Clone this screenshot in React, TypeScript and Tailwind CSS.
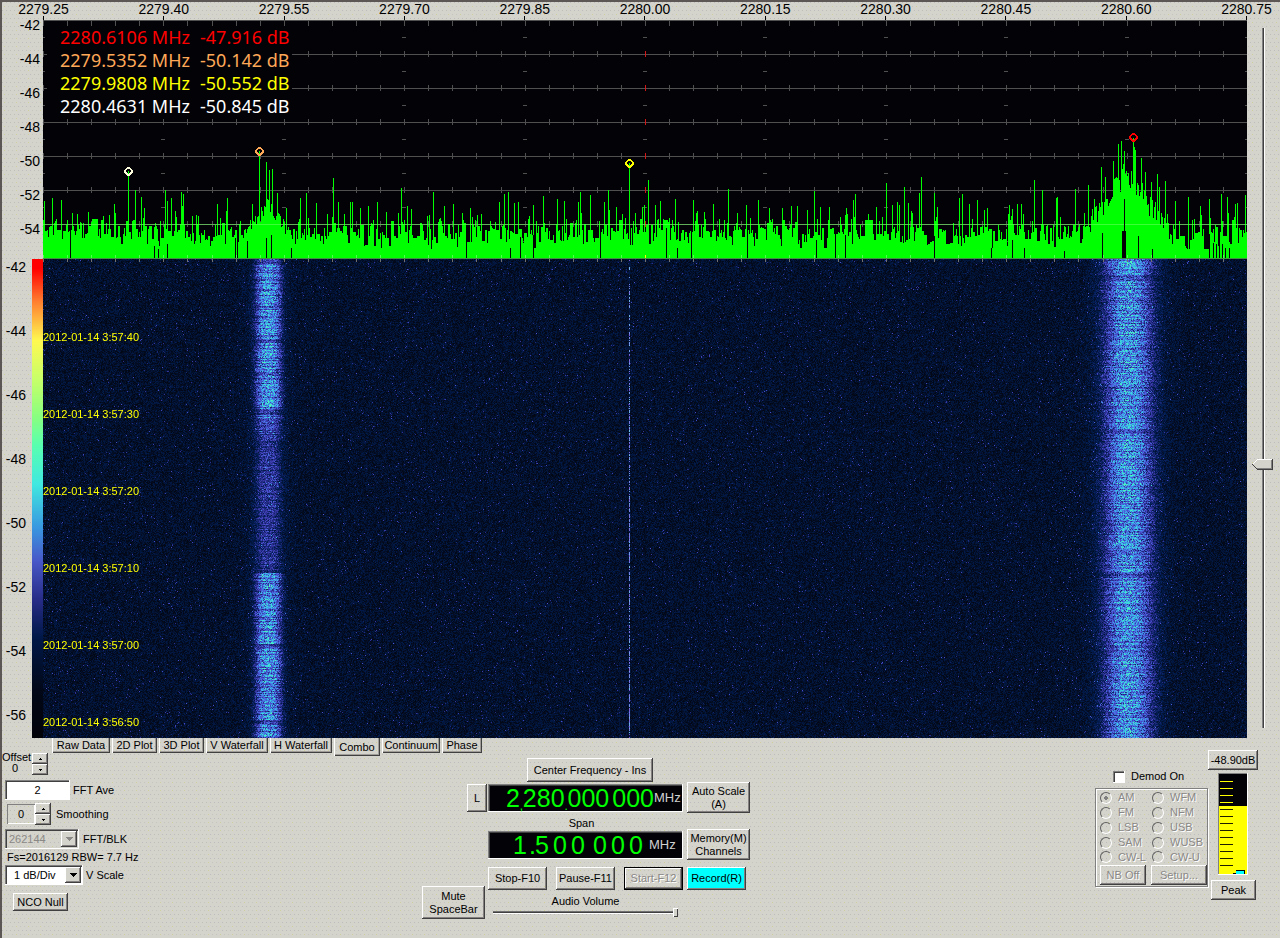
import type React from "react"

import { useEffect, useMemo, useRef, useState } from "react"

const RAISED = "shadow-[inset_-1px_-1px_#404040,inset_1px_1px_#fff,inset_-2px_-2px_#848080]"
const SUNKEN = "shadow-[inset_-1px_-1px_#fff,inset_1px_1px_#808080,inset_2px_2px_#404040]"
const DITHER =
  "bg-[#d4d3cc] bg-[image:conic-gradient(at_1px_1px,transparent_75%,#bdbdbb_0),conic-gradient(at_1px_1px,transparent_75%,#cfcf9c_0),conic-gradient(at_1px_1px,transparent_75%,#c4c4c0_0)] bg-[size:4px_8px,12px_8px,4px_8px] bg-[position:0_0,2px_4px,2px_4px]"

const PLOT_W = 1204
const PLOT_H = 239
const FALL_H = 479

const frequencies = [
  "2279.25",
  "2279.40",
  "2279.55",
  "2279.70",
  "2279.85",
  "2280.00",
  "2280.15",
  "2280.30",
  "2280.45",
  "2280.60",
  "2280.75",
]
const plotLevels = ["-42", "-44", "-46", "-48", "-50", "-52", "-54"]
const fallLevels = ["-42", "-44", "-46", "-48", "-50", "-52", "-54", "-56"]
const times = ["3:57:40", "3:57:30", "3:57:20", "3:57:10", "3:57:00", "3:56:50"]

const peaks = [
  { freq: "2280.6106 MHz", level: "-47.916 dB", color: "text-[#ff0000]" },
  { freq: "2279.5352 MHz", level: "-50.142 dB", color: "text-[#ffa858]" },
  { freq: "2279.9808 MHz", level: "-50.552 dB", color: "text-[#ffff00]" },
  { freq: "2280.4631 MHz", level: "-50.845 dB", color: "text-white" },
]

const markers = [
  { x: 85, y: 151, color: "#ffffe0" },
  { x: 216, y: 131, color: "#ffa858" },
  { x: 586, y: 143, color: "#ffff00" },
  { x: 1090, y: 117, color: "#ff0000" },
]

// [column, top] of the strongest bins
const spikes = [
  [9, 178], [18, 180], [34, 194], [45, 192], [72, 193], [85, 151], [92, 170], [98, 177], [101, 188], [122, 170],
  [124, 181], [128, 178], [138, 172], [140, 174], [149, 196], [174, 184], [184, 178], [209, 184], [216, 131],
  [223, 142], [226, 150], [229, 149], [234, 173], [243, 188], [257, 178], [263, 173], [273, 183], [290, 158],
  [295, 182], [307, 182], [309, 182], [325, 186], [334, 182], [343, 192], [358, 168], [368, 189], [390, 172],
  [401, 186], [410, 184], [427, 188], [456, 182], [461, 174], [465, 172], [471, 183], [475, 182], [490, 185],
  [500, 176], [514, 179], [521, 181], [537, 172], [535, 182], [547, 175], [561, 182], [565, 170], [566, 190],
  [573, 187], [586, 143], [605, 160], [617, 181], [612, 185], [632, 179], [650, 180], [661, 192], [670, 184],
  [685, 169], [703, 185], [715, 180], [726, 188], [739, 188], [754, 186], [771, 171], [777, 187], [786, 187],
  [812, 174], [810, 180], [803, 188], [833, 187], [843, 163], [849, 185], [854, 182], [861, 167], [865, 183],
  [878, 157], [876, 173], [891, 173], [916, 178], [919, 174], [926, 184], [934, 180], [941, 190], [966, 185],
  [974, 184], [978, 184], [991, 160], [999, 170], [1013, 178], [1014, 177], [1032, 169], [1045, 165], [1051, 179],
  [1058, 147], [1062, 157], [1070, 141], [1075, 124], [1078, 121], [1081, 131], [1090, 118], [1091, 127],
  [1092, 130], [1098, 138], [1102, 152], [1108, 162], [1114, 154], [1116, 167], [1122, 161], [1132, 181],
  [1145, 177], [1157, 186], [1166, 179], [1178, 174], [1184, 177], [1192, 184], [1194, 183], [1202, 175],
]

// [column, top] of the gaps that reach down to the base line
const gaps = [
  [27, 208], [111, 226], [115, 229], [124, 224], [192, 218], [194, 221], [204, 221], [223, 218], [228, 215],
  [248, 228], [423, 220], [467, 228], [477, 217], [490, 215], [557, 205], [623, 208], [634, 228], [648, 210],
  [704, 210], [773, 220], [792, 214], [802, 215], [948, 228], [891, 216], [969, 220], [981, 228], [1021, 231],
  [1059, 213], [1095, 216], [1109, 229], [1166, 214], [1170, 223], [1173, 224], [1176, 224], [1179, 224],
  [1182, 228], [1186, 228], [1080, 211], [1081, 179], [1082, 211], [1079, 211],
]

function createRandom(seed: number) {
  let state = seed
  return () => {
    state = (state + 0x6d2b79f5) | 0
    let t = Math.imul(state ^ (state >>> 15), 1 | state)
    t = (t + Math.imul(t ^ (t >>> 7), 61 | t)) ^ t
    return ((t ^ (t >>> 14)) >>> 0) / 4294967296
  }
}

function Spectrum() {
  const bars = useMemo(() => {
    const random = createRandom(2280)
    const tops: number[] = []
    let floor = 208
    for (let x = 0; x < PLOT_W; x++) {
      if (random() < 0.6) floor = 196 + ((random() + random()) / 2) * 34
      let top = floor
      if (random() < 0.16) top -= random() * 22
      const left = Math.abs(x - 225)
      if (left < 24) top = Math.min(top, 176 + left * 1.5 + random() * 14)
      const right = Math.abs(x - 1083)
      if (right < 40) top = Math.min(top, 140 + right * 1.4 + random() * 24)
      tops.push(Math.round(Math.max(top, 140)))
    }
    for (const [x, top] of spikes) tops[x] = top
    return tops.map((top, x) => `M${x} ${top}h1V${PLOT_H}h-1z`).join("")
  }, [])

  const ticks = Array.from({ length: 51 }, (_, i) => Math.round(i * 24.08))
  const majors = Array.from({ length: 11 }, (_, i) => Math.round(i * 120.4))

  return (
    <svg
      viewBox={`0 0 ${PLOT_W} ${PLOT_H}`}
      preserveAspectRatio="none"
      shapeRendering="crispEdges"
      className="block w-full h-full bg-[#030307]"
      role="img"
      aria-label="Spectrum"
    >
      {[0, 34, 68, 102, 136, 170, 204].map((y) => (
        <g key={y} fill="#505050">
          <rect x={0} y={y} width={PLOT_W} height={1} />
          {ticks.map((x) => (
            <rect key={x} x={x} y={y === 0 ? 0 : y - 3} width={1} height={6} fill={x === 602 && y > 0 ? "#d01818" : "#505050"} />
          ))}
          {majors.map((x) => (
            <rect key={x} x={x - 2} y={y + 17} width={4} height={1} />
          ))}
        </g>
      ))}
      <path d={bars} fill="#00ff00" />
      <rect x={0} y={204} width={PLOT_W} height={1} fill="#70ff60" opacity={0.55} />
      {ticks.map((x) => (
        <rect key={x} x={x} y={235} width={1} height={4} fill={x === 602 ? "#ffff00" : "#50ff50"} />
      ))}
      {gaps.map(([x, top]) => (
        <rect key={x} x={x} y={top} width={1} height={PLOT_H} fill="#030307" />
      ))}
      <rect x={0} y={238} width={PLOT_W} height={1} fill="#409040" />
      {markers.map((m) => (
        <path
          key={m.x}
          d={`M${m.x - 1} ${m.y - 4}h3v1h1v1h1v1h1v3h-1v1h-1v1h-1v1h-3v-1h-1v-1h-1v-1h-1v-3h1v-1h1v-1h1zM${m.x} ${m.y - 2}h-1v1h-1v2h1v1h1v1h1v-1h1v-1h1v-2h-1v-1h-1z`}
          fill={m.color}
          fillRule="evenodd"
        />
      ))}
    </svg>
  )
}

const palette = [
  [0, 2, 5, 14],
  [0.12, 3, 15, 42],
  [0.25, 2, 30, 84],
  [0.4, 48, 48, 150],
  [0.52, 76, 84, 214],
  [0.68, 64, 146, 232],
  [0.85, 56, 214, 228],
  [1, 80, 248, 180],
]

function shade(value: number) {
  const v = Math.max(0, Math.min(0.999, value))
  let i = 1
  while (palette[i][0] <= v) i++
  const a = palette[i - 1]
  const b = palette[i]
  const t = (v - a[0]) / (b[0] - a[0])
  return [1, 2, 3].map((c) => a[c] + (b[c] - a[c]) * t)
}

function leftSignal(y: number) {
  if (y < 5) return 0.3
  if (y > 79 && y < 84) return 0.28
  if (y > 150 && y < 156) return 0.24
  if (y > 160 && y < 176) return 0.32
  if (y >= 176 && y < 314) return 0.23
  if (y > 384 && y < 388) return 0.32
  if (y > 460 && y < 466) return 0.32
  return 0.53
}

function rightSignal(y: number) {
  if ((y > 16 && y < 22) || (y > 170 && y < 174) || (y > 313 && y < 319)) return 0.32
  return 0.52
}

function Waterfall() {
  const ref = useRef<HTMLCanvasElement>(null)

  useEffect(() => {
    const ctx = ref.current?.getContext("2d")
    if (!ctx) return
    const random = createRandom(77)
    const image = ctx.createImageData(PLOT_W, FALL_H)
    for (let y = 0; y < FALL_H; y++) {
      const rowLeft = leftSignal(y) * (random() < 0.28 ? 0.62 : 0.88 + random() * 0.2)
      const rowRight = rightSignal(y) * (random() < 0.24 ? 0.7 : 0.88 + random() * 0.2)
      for (let x = 0; x < PLOT_W; x++) {
        const r = random()
        let v = 0.02 + r * 0.2 + (random() < 0.035 ? random() * 0.32 : 0)
        const left = Math.exp(-Math.pow(Math.abs(x - 225) / 13, 3))
        const right = Math.exp(-Math.pow(Math.abs(x - 1085) / 24, 2.4))
        v += left * rowLeft * (0.5 + random() * 0.95)
        v += right * rowRight * (0.45 + random())
        v += 0.07 * Math.exp(-Math.pow((x - 225) / 20, 2)) + 0.08 * Math.exp(-Math.pow((x - 1085) / 34, 2))
        const onCarrier = x === 586
        if (onCarrier) v = random() < 0.4 + y / 1000 ? 0.5 + random() * 0.3 : 0.2
        const [red, green, blue] = shade(v)
        const o = (y * PLOT_W + x) * 4
        image.data[o] = onCarrier && v > 0.5 ? red + 50 : red
        image.data[o + 1] = green
        image.data[o + 2] = blue
        image.data[o + 3] = 255
      }
    }
    ctx.putImageData(image, 0, 0)
    // lower edge of the frequency ruler
    ctx.fillStyle = "#707070"
    for (let i = 0; i <= 50; i++) ctx.fillRect(Math.round(i * 24.08), 0, 1, 3)
  }, [])

  return <canvas ref={ref} width={PLOT_W} height={FALL_H} className="block w-full h-full" />
}

interface BevelButtonProps {
  children: React.ReactNode
  className?: string
  disabled?: boolean
}

function BevelButton({ children, className = "", disabled }: BevelButtonProps) {
  return (
    <button
      type="button"
      disabled={disabled}
      className={`flex items-center justify-center text-center leading-[13px] whitespace-nowrap disabled:text-[#8a8886] disabled:[text-shadow:1px_1px_#fff] ${RAISED} ${className}`}
    >
      {children}
    </button>
  )
}

function Spinner({ label }: { label: string }) {
  return (
    <div className="flex flex-col w-4">
      <button type="button" aria-label={`${label} up`} className={`h-[11px] flex items-center justify-center ${RAISED}`}>
        <svg viewBox="0 0 3 2" className="w-[3px] h-[2px]" shapeRendering="crispEdges">
          <path d="M1 0h1v1h1v1H0V1h1z" />
        </svg>
      </button>
      <button type="button" aria-label={`${label} down`} className={`h-[11px] flex items-center justify-center ${RAISED}`}>
        <svg viewBox="0 0 3 2" className="w-[3px] h-[2px]" shapeRendering="crispEdges">
          <path d="M0 0h3v1H2v1H1V1H0z" />
        </svg>
      </button>
    </div>
  )
}

interface ComboProps {
  id: string
  value: string
  className: string
  disabled?: boolean
}

function Combo({ id, value, className, disabled }: ComboProps) {
  return (
    <div className={`relative h-5 ${className} ${SUNKEN}`}>
      <select
        id={id}
        disabled={disabled}
        className="appearance-none w-full h-full bg-transparent pl-[9px] pr-4 disabled:pl-1 disabled:text-[#8a8886] disabled:opacity-100"
      >
        <option>{value}</option>
      </select>
      <span
        className={`absolute right-[2px] inset-y-[2px] w-4 bg-[#d4d3cc] flex items-center justify-center pointer-events-none ${RAISED}`}
      >
        <svg viewBox="0 0 7 4" className="w-[7px] h-1" shapeRendering="crispEdges">
          <path d="M0 0h7v1H6v1H5v1H4v1H3V3H2V2H1V1H0z" fill={disabled ? "#8a8886" : "#000"} />
        </svg>
      </span>
    </div>
  )
}

const tabs = [
  { name: "Raw Data", width: "w-[58px]" },
  { name: "2D Plot", width: "w-[45px]" },
  { name: "3D Plot", width: "w-[45px]" },
  { name: "V Waterfall", width: "w-[62px]" },
  { name: "H Waterfall", width: "w-[62px]" },
  { name: "Combo", width: "w-[46px]" },
  { name: "Continuum", width: "w-[58px]" },
  { name: "Phase", width: "w-[40px]" },
]

function Tabs() {
  const [active, setActive] = useState("Combo")

  return (
    <div role="tablist" className="flex items-start gap-[2px] pl-[50px] h-3">
      {tabs.map((tab) => (
        <button
          key={tab.name}
          type="button"
          role="tab"
          aria-selected={tab.name === active}
          onClick={() => setActive(tab.name)}
          className={`${tab.width} flex items-center justify-center whitespace-nowrap shadow-[inset_1px_0_#fff,inset_-1px_-1px_#404040,inset_-2px_-2px_#a09c98] ${
            tab.name === active ? "h-[18px]" : "h-[15px]"
          }`}
        >
          {tab.name}
        </button>
      ))}
    </div>
  )
}

function FftControls() {
  return (
    <div className="w-[420px] shrink flex flex-col items-start">
      <div className="flex pt-[3px] gap-[2px]">
        <div className="w-7 leading-[11px] -mt-px">
          <div>Offset</div>
          <div className="pl-[10px]">0</div>
        </div>
        <Spinner label="Offset" />
      </div>
      <div className="flex items-center gap-[3px] pl-[3px] mt-[5px]">
        <input id="fft-ave" defaultValue="2" className={`w-[65px] h-5 bg-white text-center ${SUNKEN}`} />
        <label htmlFor="fft-ave">FFT Ave</label>
      </div>
      <div className="flex items-center pl-[5px] mt-[3px]">
        <input
          id="smoothing"
          defaultValue="0"
          className="w-7 h-5 text-center bg-transparent shadow-[inset_1px_1px_#808080,inset_-1px_-1px_#fff]"
        />
        <Spinner label="Smoothing" />
        <label htmlFor="smoothing" className="pl-[5px]">
          Smoothing
        </label>
      </div>
      <div className="flex items-center gap-1 pl-[3px] mt-1">
        <Combo id="fft-blk" value="262144" className="w-[74px]" disabled />
        <label htmlFor="fft-blk">FFT/BLK</label>
      </div>
      <div className="pl-[5px] h-4 leading-4">Fs=2016129 RBW= 7.7 Hz</div>
      <div className="flex items-center gap-[3px] pl-[3px]">
        <Combo id="v-scale" value="1 dB/Div" className="w-[78px] bg-white" />
        <label htmlFor="v-scale">V Scale</label>
      </div>
      <BevelButton className="w-[55px] h-[18px] ml-[11px] mt-2">NCO Null</BevelButton>
    </div>
  )
}

function FrequencyControls() {
  const [volume, setVolume] = useState(100)

  return (
    <div className="flex">
      <div className="w-[65px] flex flex-col">
        <BevelButton className="w-5 h-7 self-end mt-[34px]">L</BevelButton>
        <BevelButton className="w-[63px] h-[33px] mt-[74px]">
          Mute
          <br />
          SpaceBar
        </BevelButton>
      </div>
      <div className="w-[196px] flex flex-col pl-px">
        <BevelButton className="w-[126px] h-6 ml-[39px] mt-2">Center Frequency - Ins</BevelButton>
        <div className={`mt-[2px] h-7 bg-[#030307] flex items-center justify-end text-[#00ff00] text-[25px] leading-7 ${SUNKEN}`}>
          <span>2</span>
          <span className="w-[3px] text-xs self-end leading-3">,</span>
          <span>280</span>
          <span className="w-[3px] text-xs self-end leading-3">.</span>
          <span>000</span>
          <span className="w-[3px]" />
          <span>000</span>
          <span className="w-[29px] text-[13px] text-[#d0d0d0]">MHz</span>
        </div>
        <div className="h-[19px] leading-[22px] text-center pr-2">Span</div>
        <div className={`h-7 bg-[#030307] flex items-center text-[#00ff00] text-[25px] leading-7 text-center pl-[23px] ${SUNKEN}`}>
          <span className="w-[18px]">1</span>
          <span className="w-1">.</span>
          <span className="w-[18px]">5</span>
          <span className="w-[18px]">0</span>
          <span className="w-[18px]">0</span>
          <span className="w-1" />
          <span className="w-[18px]">0</span>
          <span className="w-[18px]">0</span>
          <span className="w-[18px]">0</span>
          <span className="pl-1 text-[13px] text-[#d0d0d0]">MHz</span>
        </div>
        <div className="flex justify-between mt-2">
          <BevelButton className="w-[59px] h-[23px]">Stop-F10</BevelButton>
          <BevelButton className="w-[59px] h-[23px]">Pause-F11</BevelButton>
          <span className="border border-black">
            <BevelButton className="w-[57px] h-[21px]" disabled>
              Start-F12
            </BevelButton>
          </span>
        </div>
        <label htmlFor="volume" className="text-center leading-[22px]">
          Audio Volume
        </label>
        <input
          id="volume"
          type="range"
          value={volume}
          onChange={(e) => setVolume(Number(e.target.value))}
          className="appearance-none block w-[185px] h-[3px] ml-[5px] -mt-px bg-[linear-gradient(#707070_1px,#404040_1px,#404040_2px,#fff_2px)] [&::-webkit-slider-thumb]:appearance-none [&::-webkit-slider-thumb]:w-[5px] [&::-webkit-slider-thumb]:h-[9px] [&::-webkit-slider-thumb]:bg-[#d4d3cc] [&::-webkit-slider-thumb]:shadow-[inset_1px_1px_#fff,inset_-1px_-1px_#404040]"
        />
      </div>
      <div className="flex flex-col pl-1">
        <BevelButton className="w-[63px] h-[31px] mt-8">
          Auto Scale
          <br />
          (A)
        </BevelButton>
        <BevelButton className="w-[63px] h-[31px] mt-4">
          Memory(M)
          <br />
          Channels
        </BevelButton>
        <BevelButton className="w-[59px] h-[23px] mt-[7px] bg-[#00ffff]">Record(R)</BevelButton>
      </div>
    </div>
  )
}

const modes = ["AM", "WFM", "FM", "NFM", "LSB", "USB", "SAM", "WUSB", "CW-L", "CW-U"]

function DemodControls() {
  return (
    <div className="w-[113px] pt-5 shrink-0">
      <div className="flex items-center gap-[6px] pl-[18px] h-[13px]">
        <input id="demod" type="checkbox" className={`appearance-none w-3 h-3 bg-white checked:bg-black ${SUNKEN}`} />
        <label htmlFor="demod">Demod On</label>
      </div>
      <fieldset
        disabled
        className="mt-[5px] border border-[#808080] shadow-[1px_1px_#fff,inset_1px_1px_#fff] pt-px pl-1 h-[99px] text-[#8a8886] [text-shadow:1px_1px_#fff]"
      >
        <div className="grid grid-cols-[52px_1fr]">
          {modes.map((mode) => (
            <label key={mode} className="flex items-center gap-[6px] h-[15px] [&:nth-child(n+9)]:h-[14px]">
              <input
                type="radio"
                name="mode"
                defaultChecked={mode === "AM"}
                className="appearance-none w-3 h-3 shrink-0 rounded-full border border-[#606060] border-r-white border-b-white checked:bg-[radial-gradient(circle,#808080_2px,transparent_2px)]"
              />
              {mode}
            </label>
          ))}
        </div>
        <div className="flex gap-[5px] mt-px">
          <BevelButton className="w-[46px] h-5" disabled>
            NB Off
          </BevelButton>
          <BevelButton className="w-[56px] h-5" disabled>
            Setup...
          </BevelButton>
        </div>
      </fieldset>
    </div>
  )
}

function LevelMeter() {
  return (
    <div className="w-[72px] shrink-0 flex flex-col items-start">
      <BevelButton className="w-[50px] h-[20px]">-48.90dB</BevelButton>
      <div className={`ml-[10px] mt-[3px] w-[30px] h-[102px] p-px ${SUNKEN}`}>
        <svg viewBox="0 0 28 100" className="block w-full h-full" shapeRendering="crispEdges" role="img" aria-label="Level">
          <rect width={28} height={100} fill="#030307" />
          <rect y={32} width={28} height={68} fill="#ffff00" />
          {Array.from({ length: 13 }, (_, i) => (
            <rect key={i} x={1} y={7 + i * 7} width={13} height={1} fill={i < 4 ? "#ffff00" : "#202000"} />
          ))}
          <path d="M14 99h3v-3h9v4H14z" fill="#000" />
          <rect x={17} y={97} width={8} height={3} fill="#00ffff" />
        </svg>
      </div>
      <BevelButton className="w-[45px] h-5 ml-[3px] mt-[5px]">Peak</BevelButton>
    </div>
  )
}

function GainSlider() {
  const [gain, setGain] = useState(38)

  return (
    <div className="relative w-[33px] shrink-0 pt-[26px]">
      <div className="h-[700px] w-[3px] ml-[15px] bg-[linear-gradient(90deg,#808080_1px,#404040_1px,#404040_2px,#fff_2px)]">
        <svg
          viewBox="0 0 21 11"
          className="relative -left-[10px] w-[21px] h-[11px] max-w-none"
          style={{ top: `${(100 - gain) * 0.993}%` }}
          shapeRendering="crispEdges"
        >
          <path d="M0 5L5 0h16v11H5z" fill="#d4d3cc" />
          <path d="M0 5L5 0h15v1H5L1 5z" fill="#fff" />
          <path d="M0 5l5 5h15V0h1v11H5z" fill="#404040" />
          <path d="M5 9h14V1h1v9H5z" fill="#808080" />
        </svg>
      </div>
      <input
        type="range"
        aria-label="Gain"
        value={gain}
        onChange={(e) => setGain(Number(e.target.value))}
        className="absolute inset-0 w-full h-full opacity-0 [writing-mode:vertical-lr] [direction:rtl]"
      />
    </div>
  )
}

export default function App() {
  return (
    <div
      className={`min-h-screen flex flex-col border-l-2 border-t-2 border-[#5c5654] text-[11px] leading-[13px] text-black font-['Liberation_Sans',Arial,sans-serif] ${DITHER}`}
    >
      <div className="flex">
        <div className="flex-1 min-w-0">
          {/* Frequency ruler */}
          <div className="flex justify-between h-[18px] ml-[41px] text-sm leading-[14px]">
            {frequencies.map((f) => (
              <div key={f} className="w-px flex flex-col items-center">
                <span className="h-[14px] whitespace-nowrap">{f}</span>
                <span className="w-px h-1 bg-black" />
              </div>
            ))}
          </div>

          {/* Spectrum */}
          <div className="flex h-[239px]">
            <div className="w-[41px] shrink-0 pr-[3px] -mt-3 text-sm text-right">
              {plotLevels.map((level) => (
                <div key={level} className="h-[34px] leading-[34px]">
                  {level}
                </div>
              ))}
            </div>
            <div className="relative flex-1 min-w-0">
              <Spectrum />
              <div className="absolute left-1 top-[6px] w-[245px] pl-[13px] bg-[#030307] text-lg leading-[23px] font-['Noto_Sans',sans-serif]">
                {peaks.map((p) => (
                  <div key={p.freq} className={`flex whitespace-nowrap ${p.color}`}>
                    <span className="w-[140px]">{p.freq}</span>
                    <span>{p.level}</span>
                  </div>
                ))}
              </div>
            </div>
          </div>

          {/* Waterfall */}
          <div className="flex h-[479px]">
            <div className="w-[30px] shrink-0 pr-[6px] -mt-6 text-sm text-right">
              {fallLevels.map((level) => (
                <div key={level} className="h-16 leading-[64px]">
                  {level}
                </div>
              ))}
            </div>
            <div className="w-[11px] shrink-0 bg-[linear-gradient(#ff0000_0%,#ff0000_2%,#ff8030_9%,#fff850_17%,#c8ff68_25%,#88ff80_33%,#58ffb0_39%,#40e8e0_47%,#3898e0_56%,#4858c8_63%,#282c88_71%,#001848_79%,#020818_90%,#020208_100%)]" />
            <div className="relative flex-1 min-w-0">
              <Waterfall />
              <div className="absolute left-0 top-[40px] text-[#ffff00] whitespace-nowrap">
                {times.map((time) => (
                  <div key={time} className="h-[77px] leading-[77px]">
                    2012-01-14 {time}
                  </div>
                ))}
              </div>
            </div>
          </div>
        </div>
        <GainSlider />
      </div>

      <Tabs />

      <div className="flex">
        <FftControls />
        <FrequencyControls />
        <div className="flex ml-auto">
          <DemodControls />
          <LevelMeter />
        </div>
      </div>
    </div>
  )
}
